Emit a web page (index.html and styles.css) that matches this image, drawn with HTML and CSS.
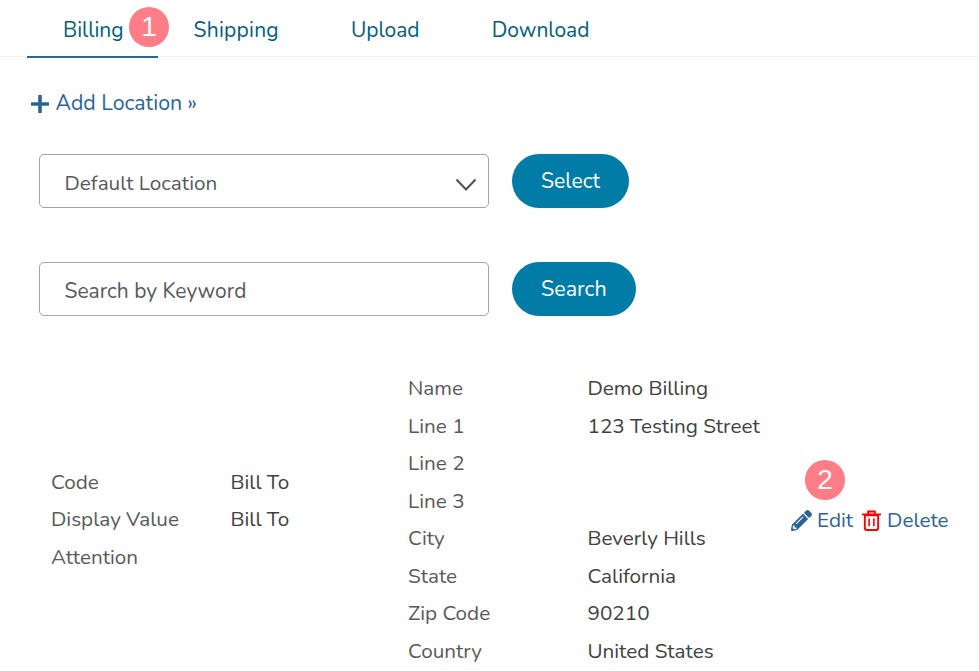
FILE: index.html
```html
<!DOCTYPE html>
<html lang="en">
<head>
<meta charset="utf-8">
<title>Locations</title>
<link rel="stylesheet" href="styles.css">
</head>
<body>
<nav class="tabs">
  <a class="tab active">Billing<span class="badge badge-one">1</span></a>
  <a class="tab tab-shipping">Shipping</a>
  <a class="tab">Upload</a>
  <a class="tab">Download</a>
</nav>
<a class="add"><svg class="plus" viewBox="0 0 18 18" width="18" height="18"><path d="M9 1v16M1 9h16" stroke="#2a6496" stroke-width="3.6" stroke-linecap="round" fill="none"/></svg>Add Location »</a>
<div class="form-row">
  <div class="field">Default Location<svg class="chev" viewBox="0 0 22 14" width="22" height="14"><path d="M1.5 1.5 11 11.5l9.500-10" stroke="#555" stroke-width="2.200" fill="none"/></svg></div>
  <button class="btn btn-select">Select</button>
</div>
<div class="form-row second">
  <div class="field field-search">Search by Keyword</div>
  <button class="btn btn-search">Search</button>
</div>
<section class="record">
  <dl class="pairs left">
    <dt>Code</dt><dd>Bill To</dd>
    <dt>Display Value</dt><dd>Bill To</dd>
    <dt>Attention</dt><dd></dd>
  </dl>
  <dl class="pairs middle">
    <dt>Name</dt><dd>Demo Billing</dd>
    <dt>Line 1</dt><dd>123 Testing Street</dd>
    <dt>Line 2</dt><dd></dd>
    <dt>Line 3</dt><dd></dd>
    <dt>City</dt><dd>Beverly Hills</dd>
    <dt>State</dt><dd>California</dd>
    <dt>Zip Code</dt><dd>90210</dd>
    <dt>Country</dt><dd>United States</dd>
  </dl>
  <div class="actions">
    <span class="badge badge-two">2</span>
    <a class="action"><svg viewBox="0 0 512 512" width="21" height="21"><path fill="#2a6496" d="M497.900 142.100l-46.100 46.100c-4.700 4.700-12.300 4.700-17 0l-111-111c-4.700-4.700-4.700-12.300 0-17l46.100-46.100c18.700-18.700 49.100-18.700 67.900 0l60.100 60.100c18.800 18.700 18.800 49.100 0 67.900zM284.200 99.800L21.600 362.400.4 483.900c-2.900 16.400 11.400 30.600 27.800 27.800l121.500-21.300 262.600-262.600c4.700-4.700 4.700-12.300 0-17l-111-111c-4.800-4.700-12.400-4.700-17.100 0zM124.100 339.900c-5.500-5.500-5.500-14.300 0-19.800l154-154c5.500-5.500 14.300-5.500 19.800 0s5.500 14.300 0 19.800l-154 154c-5.500 5.500-14.300 5.500-19.800 0zM88 424h48v36.300l-64.500 11.300-31.100-31.100L51.700 376H88v48z"/></svg>Edit</a>
    <a class="action action-delete"><svg viewBox="0 0 20 22" width="19" height="21"><path fill="none" stroke="#ff0000" stroke-width="2" d="M3 5.500h14V19a2 2 0 0 1-2 2H5a2 2 0 0 1-2-2zM0 4.500h20M6.500 4.500V1.500h7v3"/><path stroke="#ff0000" stroke-width="1.700" d="M7.500 9v8M12.500 9v8"/></svg>Delete</a>
  </div>
</section>
</body>
</html>
```

FILE: styles.css
```css
html, body {
  margin: 0;
  height: 671px;
  overflow: hidden;
  background: #fff;
}
body {
  font-family: "Nunito", "Open Sans", "Noto Sans", sans-serif;
  font-size: 20.700px;
  color: #58595b;
  position: relative;
}
.tabs {
  display: flex;
  height: 56px;
  padding-left: 27px;
  border-bottom: 1px solid #f1f1f1;
}
.tab {
  position: relative;
  display: block;
  padding: 0 36px;
  line-height: 61px;
  color: #005e7d;
  font-size: 21px;
}
.tab.active {
  height: 56px;
  padding-right: 34px;
  border-bottom: 2px solid #2a6496;
}
.tab-shipping {
  letter-spacing: 0.25px;
}
.badge {
  position: absolute;
  width: 40px;
  height: 40px;
  border-radius: 50%;
  background: #ff7d87;
  color: #fff;
  font-family: "Liberation Sans", sans-serif;
  font-size: 28px;
  line-height: 40px;
  text-align: center;
  letter-spacing: 0;
}
.badge-one {
  left: 102px;
  top: 7px;
}
.badge-two {
  left: 14px;
  top: -44px;
}
.add {
  display: flex;
  align-items: center;
  gap: 6.500px;
  width: max-content;
  margin: 32px 0 0 31px;
  line-height: 29px;
  color: #2a6496;
  font-size: 21.300px;
}
.form-row {
  display: flex;
  gap: 23px;
  margin: 36px 0 0 39px;
}
.form-row.second {
  margin-top: 54px;
}
.field {
  box-sizing: border-box;
  position: relative;
  width: 450px;
  height: 54px;
  padding-left: 24.500px;
  border: 1px solid #a5a5a5;
  border-radius: 5px;
  line-height: 56px;
}
.field-search {
  font-size: 21px;
}
.chev {
  position: absolute;
  right: 11px;
  top: 23px;
}
.btn {
  height: 54px;
  border: 0;
  border-radius: 27px;
  background: #007ca6;
  color: #fff;
  font: inherit;
  font-size: 21.200px;
  line-height: 52px;
  padding: 0 29px 1px;
}
.btn-search {
  font-size: 21.500px;
}
.record {
  display: flex;
  align-items: center;
  margin: 53px 0 0 51px;
}
.pairs {
  display: grid;
  grid-template-columns: 179.500px auto;
  grid-auto-rows: 37.5px;
  margin: 0;
  line-height: 39.500px;
}
.pairs dt {
  color: #58595b;
}
.pairs dd {
  margin: 0;
  color: #414042;
}
.pairs.left {
  width: 357px;
  flex: none;
}
.pairs.middle {
  width: 382px;
  flex: none;
}
.actions {
  position: relative;
  display: flex;
  gap: 9px;
  align-items: center;
  padding-top: 2px;
  color: #2a6496;
  margin-left: 1px;
}
.action {
  display: flex;
  align-items: center;
  gap: 5px;
}
.action-delete {
  gap: 6px;
}
```
